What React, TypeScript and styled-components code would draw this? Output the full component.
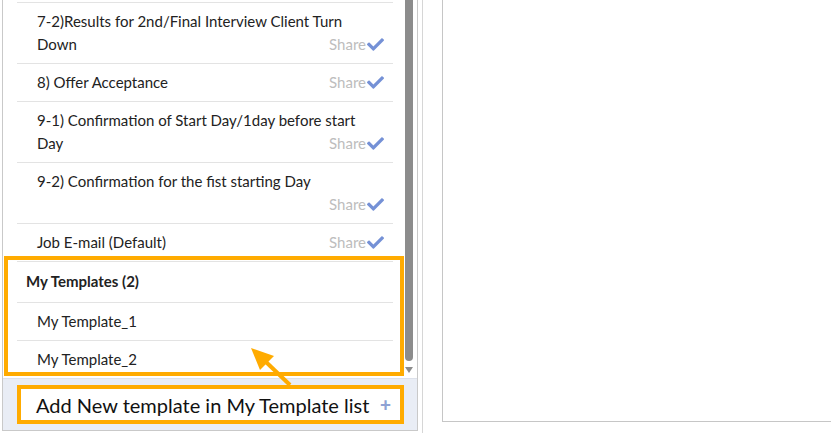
import styled, { createGlobalStyle } from "styled-components";
import { FaCheck } from "react-icons/fa";

const GlobalStyle = createGlobalStyle`
  html, body {
    margin: 0;
    padding: 0;
    background: #ffffff;
  }
  body {
    font-family: Lato, "Noto Sans", sans-serif;
    color: #222;
  }
`;

const Page = styled.div`
  display: flex;
  height: 433px;
  overflow: hidden;
`;

const TemplatePanel = styled.div`
  position: relative;
  margin-left: 2px;
  width: 414px;
  height: 430px;
  border-left: 1px solid #c9c9c9;
  border-right: 1px solid #c9c9c9;
  border-bottom: 1px solid #c9c9c9;
  display: flex;
  flex-direction: column;
  flex-shrink: 0;
`;

const ListArea = styled.div`
  display: flex;
  height: 378px;
  overflow: hidden;
`;

const Rows = styled.div`
  flex: 1;
  padding: 2px 11px 0 14px;
`;

const RowList = styled.div`
  border-top: 1px solid #e3e3e3;
`;

const Row = styled.div<{ $last?: boolean }>`
  display: flow-root;
  padding: 7px 9px 7px 20px;
  font-size: 15px;
  line-height: 23px;
  color: #222;
  border-bottom: ${(p) => (p.$last ? "none" : "1px solid #e3e3e3")};
`;

const Share = styled.span`
  float: right;
  margin-left: 20px;
  display: inline-flex;
  align-items: center;
  gap: 1px;
  font-size: 15px;
  color: #bdbdbd;
  svg {
    color: #7591d6;
    font-size: 17px;
  }
`;

const TemplatesSection = styled.div`
  position: relative;
`;

const SectionTitle = styled.div`
  padding: 8px 0 9px 9px;
  font-size: 15px;
  line-height: 23px;
  font-weight: 700;
  color: #222;
  border-bottom: 1px solid #e3e3e3;
`;

const Highlight = styled.div<{ $t: number; $r: number; $b: number; $l: number }>`
  position: absolute;
  top: ${(p) => p.$t}px;
  right: ${(p) => p.$r}px;
  bottom: ${(p) => p.$b}px;
  left: ${(p) => p.$l}px;
  border: 4px solid #ffab00;
  pointer-events: none;
`;

const ScrollTrack = styled.div`
  width: 13px;
  display: flex;
  flex-direction: column;
  align-items: flex-start;
`;

const ScrollThumb = styled.div`
  margin-left: 1px;
  width: 8px;
  height: 361px;
  background: #8c8c8c;
  border-radius: 0 0 4px 4px;
`;

const ScrollArrow = styled.div`
  margin: 6px 0 0 1px;
  width: 0;
  height: 0;
  border-left: 4px solid transparent;
  border-right: 4px solid transparent;
  border-top: 6px solid #8c8c8c;
`;

const Footer = styled.div`
  flex: 1;
  background: #e9edf5;
  border-top: 1px solid #dde1ea;
  padding: 6px 13px 0 14px;
`;

const AddButton = styled.div`
  position: relative;
  height: 39px;
  box-sizing: border-box;
  background: #ffffff;
  display: flex;
  align-items: center;
  justify-content: space-between;
  padding: 0 13px 0 19px;
  font-size: 20px;
  color: #111;
`;

const PlusMark = styled.span`
  color: #8fa2d4;
  font-size: 19px;
  font-weight: 900;
`;

const Pointer = styled.svg`
  position: absolute;
  left: 237px;
  top: 340px;
  pointer-events: none;
`;

const Divider = styled.div`
  width: 1px;
  margin-left: 4px;
  background: #d6d6d6;
  flex-shrink: 0;
`;

const Preview = styled.div`
  margin-left: 19px;
  flex: 1;
  height: 422px;
  box-sizing: border-box;
  border-left: 1px solid #c6c6c6;
  border-bottom: 1px solid #c6c6c6;
`;

const defaults = [
  "7-2)Results for 2nd/Final Interview Client Turn Down",
  "8) Offer Acceptance",
  "9-1) Confirmation of Start Day/1day before start Day",
  "9-2) Confirmation for the fist starting Day",
  "Job E-mail (Default)",
];

const mine = ["My Template_1", "My Template_2"];

function App() {
  return (
    <>
      <GlobalStyle />
      <Page>
        <TemplatePanel>
          <ListArea>
            <Rows>
              <RowList>
                {defaults.map((name) => (
                  <Row key={name}>
                    <span>{name}</span>
                    <Share>
                      Share
                      <FaCheck />
                    </Share>
                  </Row>
                ))}
              </RowList>
              <TemplatesSection>
                <SectionTitle>My Templates ({mine.length})</SectionTitle>
                {mine.map((name, idx) => (
                  <Row key={name} $last={idx === mine.length - 1}>
                    {name}
                  </Row>
                ))}
                <Highlight $t={-6} $r={-11} $b={2} $l={-13} />
              </TemplatesSection>
            </Rows>
            <ScrollTrack>
              <ScrollThumb />
              <ScrollArrow />
            </ScrollTrack>
          </ListArea>
          <Footer>
            <AddButton>
              Add New template in My Template list
              <PlusMark>+</PlusMark>
              <Highlight $t={0} $r={0} $b={0} $l={0} />
            </AddButton>
          </Footer>
          <Pointer width="60" height="50" viewBox="0 0 60 50">
            <polygon points="11,8 34,16 20,30" fill="#ffab00" />
            <line x1="26" y1="22" x2="50" y2="45" stroke="#ffab00" strokeWidth="4" />
          </Pointer>
        </TemplatePanel>
        <Divider />
        <Preview />
      </Page>
    </>
  );
}

export default App;
